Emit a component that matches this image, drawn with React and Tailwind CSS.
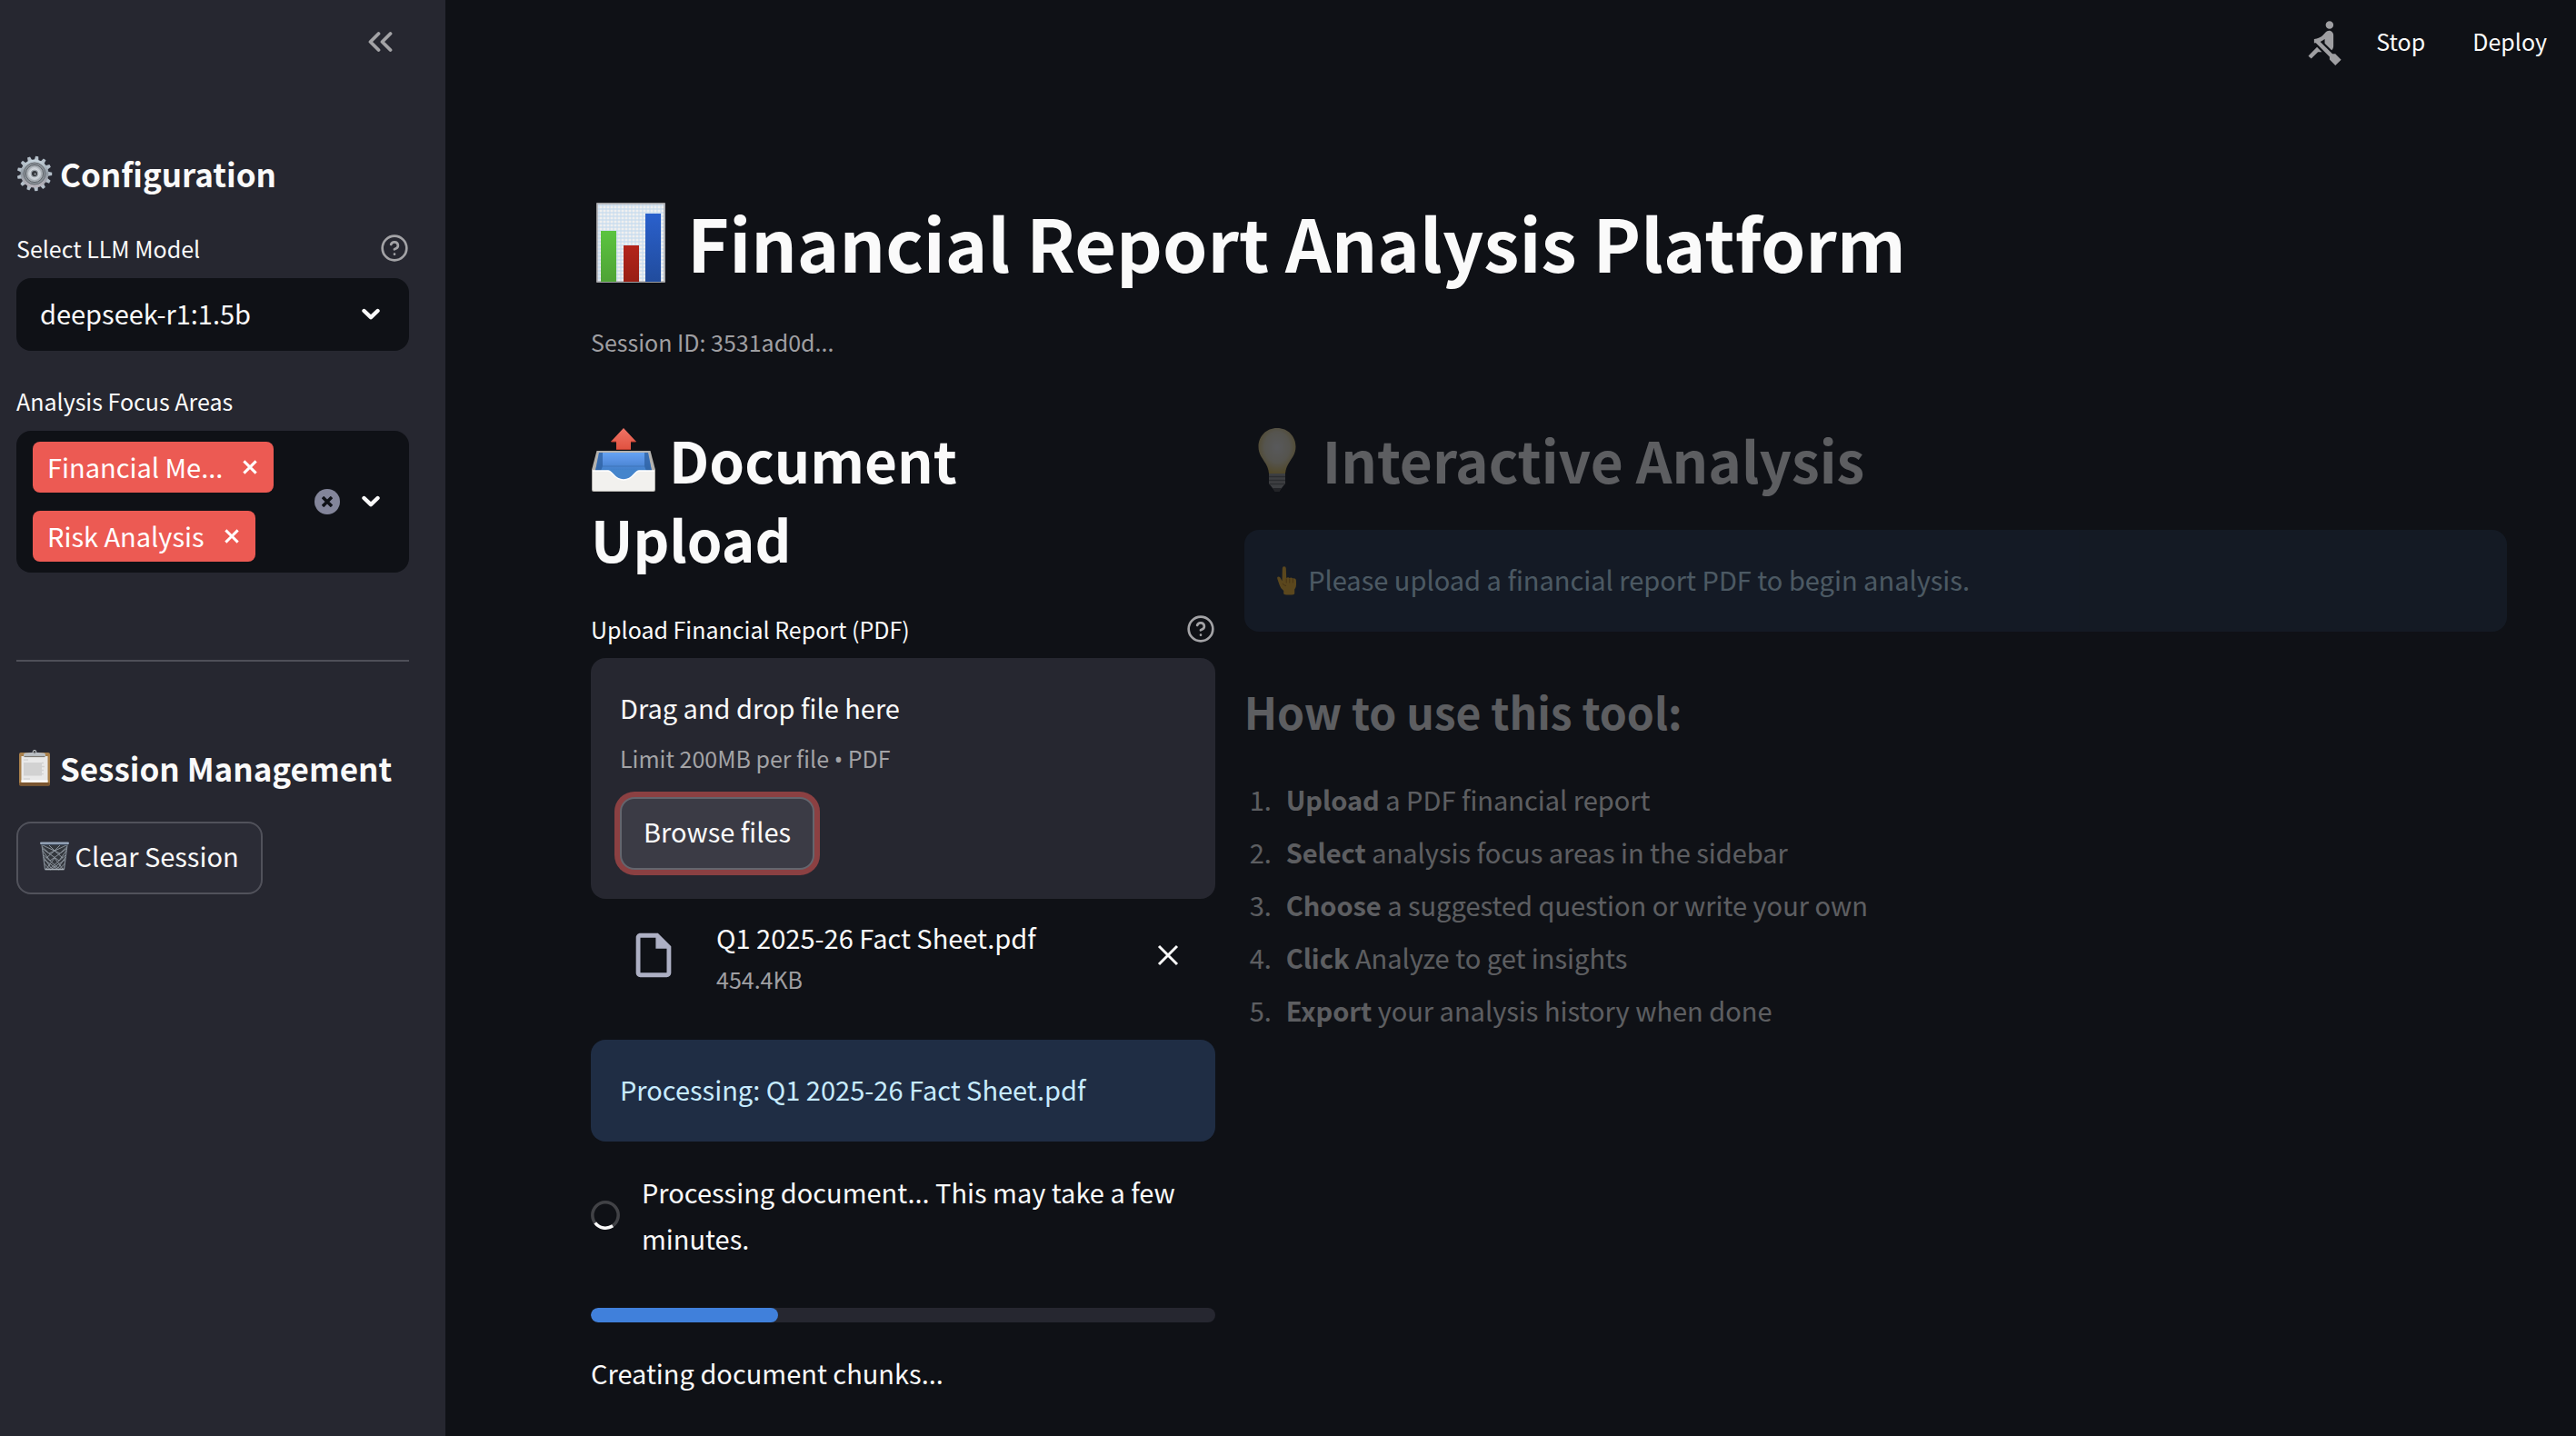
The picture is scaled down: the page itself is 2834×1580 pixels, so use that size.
import React from "react";
import { MdRowing, MdOutlineInsertDriveFile } from "react-icons/md";

function ChevronDown() {
  return (
    <svg viewBox="0 0 20 14" className="h-[14px] w-5" fill="none" stroke="#fafafa" strokeWidth="4.4" strokeLinecap="round" strokeLinejoin="round" aria-hidden="true">
      <path d="M2.5 3 10 10.2 17.5 3" />
    </svg>
  );
}

function Help({ label }) {
  return (
    <button type="button" aria-label={label} className="size-8 shrink-0">
      <svg viewBox="0 0 24 24" className="size-8" fill="none" stroke="#a3a3a6" strokeWidth="2" strokeLinecap="round" strokeLinejoin="round" aria-hidden="true">
        <circle cx="12" cy="12" r="10" />
        <path d="M9.09 9a3 3 0 0 1 5.83 1c0 2-3 3-3 3M12 17h.01" />
      </svg>
    </button>
  );
}

function Cross({ className, width }) {
  return (
    <svg viewBox="0 0 24 24" className={className} fill="none" stroke="currentColor" strokeWidth={width} aria-hidden="true">
      <path d="M2 2 22 22M22 2 2 22" />
    </svg>
  );
}

const TEETH = Array.from({ length: 13 }, (_, i) => (i * 360) / 13 + 8);

function GearIcon() {
  return (
    <svg viewBox="0 0 40 40" className="inline-block size-10 align-[-5px]" aria-hidden="true">
      <defs>
        <linearGradient id="steel" x1="0" y1="0" x2="0" y2="1">
          <stop offset="0" stopColor="#c9d6df" />
          <stop offset=".5" stopColor="#8f98a1" />
          <stop offset="1" stopColor="#b9b4bc" />
        </linearGradient>
      </defs>
      {TEETH.map((a) => (
        <path key={a} d="M17.6 5.5 18.4.8h3.2l.8 4.7z" fill="#b3bec8" transform={`rotate(${a} 20 20)`} />
      ))}
      <circle cx="20" cy="20" r="15.4" fill="url(#steel)" />
      <circle cx="20" cy="20" r="12" fill="#8b9299" stroke="#686d73" strokeWidth="1" />
      <circle cx="20" cy="20" r="9.6" fill="#a7adb3" stroke="#5d6268" strokeWidth="1" />
      <circle cx="20" cy="20" r="7.2" fill="#c6ccd2" />
      <circle cx="20" cy="20" r="5" fill="#9fa6ad" stroke="#dfe4e9" strokeWidth="1" />
      <circle cx="20" cy="20" r="3" fill="#33363b" />
      <circle cx="20.6" cy="20.6" r="1" fill="#a9afb6" />
    </svg>
  );
}

function ClipboardIcon() {
  return (
    <svg viewBox="0 0 40 40" className="inline-block size-10 align-[-5px]" aria-hidden="true">
      <rect x="3" y="3" width="34" height="36.5" rx="2" fill="#a87f4a" />
      <rect x="3" y="36" width="34" height="3.5" rx="1.5" fill="#7b5630" />
      <rect x="5.500" y="7" width="29" height="28.500" fill="#e9e9e9" />
      <rect x="5.500" y="33.500" width="29" height="2.200" fill="#ffffff" />
      <path d="M8 11h5M8 32h7" stroke="#cccccc" strokeWidth="1" />
      <rect x="8" y="14" width="20" height="14.500" fill="#d2d2d2" />
      <path d="M28 14.500h2M28 18.500h3M28 22.500h2M28 26.500h2" stroke="#d2d2d2" strokeWidth="1.400" />
      <path d="M8 7.200V5.500Q8 3.700 10 3.500l6-.5h8l6 .5q2 .2 2 2v1.700z" fill="#b9bec3" />
      <path d="M8.500 7.500h23" stroke="#7d7872" strokeWidth="1.200" />
      <circle cx="20" cy="2.300" r="1.900" fill="#4d4f52" stroke="#c3c7cb" strokeWidth="1" />
    </svg>
  );
}

function BinIcon() {
  return (
    <svg viewBox="0 0 32 32" className="inline-block size-8 align-[-4px]" aria-hidden="true">
      <path d="M1.500 2h29L27 30q-.2 1.500-1.500 1.500h-19Q5.200 31.500 5 30z" fill="#34383e" />
      <path d="M2.500 6 10 13l19-9M3 10l8 11L29 8M4 17l8 12 16-14M4.500 24l7 7 16-11M29.500 6 22 13 3 4M29 10l-8 11L3 8M28 17l-8 12L4 15M27.500 24l-7 7L4.500 20M10 4l6 6 6-6M7 30l9-12 9 12M16 10l-9 8M16 10l9 8" fill="none" stroke="#8a929b" strokeWidth="1" />
      <path d="M2 3.500 5.500 30.500M30 3.500 26.500 30.500" stroke="#828b95" strokeWidth="1.2" />
      <rect x="0" y=".5" width="32" height="2.600" rx="1.300" fill="#9aa9bd" />
      <path d="M2 3.300h28" stroke="#3c4a5f" strokeWidth="1" />
      <path d="M5.500 30.500h21" stroke="#a7afb8" strokeWidth="1.600" />
    </svg>
  );
}

const GRID = Array.from({ length: 21 }, (_, i) => 4 * i + 3);

function ChartIcon() {
  return (
    <svg viewBox="0 0 88 88" className="inline-block size-[88px] align-[-11px]" aria-hidden="true">
      <defs>
        <linearGradient id="bar-green" x1="0" y1="0" x2="0" y2="1">
          <stop offset="0" stopColor="#5bc43f" />
          <stop offset="1" stopColor="#4fa336" />
        </linearGradient>
        <linearGradient id="bar-red" x1="0" y1="0" x2="0" y2="1">
          <stop offset="0" stopColor="#b3241b" />
          <stop offset="1" stopColor="#981e14" />
        </linearGradient>
        <linearGradient id="bar-blue" x1="0" y1="0" x2="0" y2="1">
          <stop offset="0" stopColor="#2a60cc" />
          <stop offset="1" stopColor="#214c9d" />
        </linearGradient>
      </defs>
      <rect x="6.500" y=".5" width="75" height="87" fill="#f0f0f0" />
      {GRID.map((p) => (
        <path key={p} d={`M7 ${p}H81`} stroke="#bdd6ec" strokeWidth="1" />
      ))}
      {GRID.slice(1, 20).map((p) => (
        <path key={p} d={`M${p + 2} 1V87`} stroke="#c5dbef" strokeWidth="1" />
      ))}
      <rect x="7" y="1" width="74" height="86" fill="none" stroke="#a9a9ad" strokeWidth="1.500" />
      <rect x="11" y="31" width="17" height="56" fill="url(#bar-green)" />
      <rect x="36" y="47" width="17" height="40" fill="url(#bar-red)" />
      <rect x="60" y="12" width="17" height="75" fill="url(#bar-blue)" />
    </svg>
  );
}

function OutboxIcon() {
  return (
    <svg viewBox="0 0 72 72" className="inline-block size-[72px] align-[-10px]" aria-hidden="true">
      <defs>
        <linearGradient id="tray" x1="0" y1="0" x2="0" y2="1">
          <stop offset="0" stopColor="#65a3f3" />
          <stop offset=".5" stopColor="#568fe0" />
          <stop offset="1" stopColor="#3f7fc8" />
        </linearGradient>
        <linearGradient id="arrow" x1="0" y1="0" x2="0" y2="1">
          <stop offset="0" stopColor="#f07466" />
          <stop offset="1" stopColor="#e0513f" />
        </linearGradient>
      </defs>
      <path d="M6.500 26h59L71 47v22q0 2-2 2H3q-2 0-2-2V47z" fill="#b4b2ae" />
      <path d="M9 28h54l4 20H5z" fill="url(#tray)" />
      <path d="M9 28 5 48h6l2-5V28zM63 28l4 20h-6l-2-5V28z" fill="#2c5f9f" opacity=".75" />
      <path d="M13 43h46" stroke="#3f75b8" strokeWidth="1" />
      <path d="M16 47h40L49 58H23z" fill="#4585cc" />
      <path d="M2 48h17c5 0 6 10 17 10s12-10 17-10h17v20.500q0 1.500-1.500 1.500h-65Q2 70 2 68.500z" fill="#f2f1ee" />
      <path d="M2 48h17c5 0 6 10 17 10s12-10 17-10h17" fill="none" stroke="#ffffff" strokeWidth="1.500" />
      <path d="M36 1 50 16H44v9H28v-9H22z" fill="url(#arrow)" />
      <path d="M28 24.500h16M22.500 16H28M44 16h5.500" stroke="#b5392b" strokeWidth="1.200" />
    </svg>
  );
}

function BulbIcon() {
  return (
    <svg viewBox="0 0 72 72" className="inline-block size-[72px] align-[-10px]" aria-hidden="true">
      <defs>
        <radialGradient id="glass" cx=".5" cy=".42" r=".6">
          <stop offset="0" stopColor="#eceae6" />
          <stop offset=".55" stopColor="#e3dcc2" />
          <stop offset="1" stopColor="#d8b84e" />
        </radialGradient>
      </defs>
      <path d="M36 1C24 1 15.500 10 15.500 21.500 15.500 34 26 38 27 51h18c1-13 11.500-17 11.500-29.500C56.500 10 48 1 36 1z" fill="url(#glass)" />
      <path d="M27 51h18v11l-4 5-3 4h-4l-3-4-4-5z" fill="#9c9c9c" />
      <path d="M27 54.500h18M27 58.500h18M27.500 62.500h17" stroke="#666666" strokeWidth="1.600" />
      <path d="M31 67h10l-3 4h-4z" fill="#4a4a4a" />
    </svg>
  );
}

function PointUpIcon() {
  return (
    <svg viewBox="0 0 32 32" className="inline-block size-8 align-[-5px]" aria-hidden="true">
      <path d="M9.800 2.500q0-2.200 2-2.200t2 2.200l.4 10.500q1.800-1.200 3.500-.1 2-.9 3.400.5 3.900-.6 3.900 3v4.100q0 3-1.800 5v4.500q0 1.500-6 1.500t-6-1.500v-3q-3.200-2-4.600-6.500L4.500 14.500q-1-3 1-3t2.500 2l1.500 2.800z" fill="#f5b52e" />
      <path d="M14.200 13.500v5M17.800 13.500v5M21.300 14v4.500M10 19q1.500 2.500 4 2.500" fill="none" stroke="#b97a14" strokeWidth="1" />
    </svg>
  );
}

function Tag({ children }) {
  return (
    <span className="flex h-14 items-center gap-[22px] rounded-lg bg-[#ec5a53] pr-[18px] pb-px pl-4 text-[29px] text-white">
      <span className="whitespace-nowrap">{children}</span>
      <button type="button" aria-label={`Remove ${children}`}>
        <Cross className="size-4" width="4.500" />
      </button>
    </span>
  );
}

function Sidebar() {
  return (
    <aside className="w-[490px] shrink-0 bg-[#262730] pl-[18px] pr-10">
      <div className="flex h-[92px] items-center justify-end pr-[18px]">
        <button type="button" aria-label="Collapse sidebar">
          <svg viewBox="0 0 28 24" className="h-6 w-7" fill="none" stroke="#a3a3a6" strokeWidth="3.800" strokeLinecap="round" strokeLinejoin="round" aria-hidden="true">
            <path d="M12.500 3 3.500 12l9 9M25.500 3l-9 9 9 9" />
          </svg>
        </button>
      </div>

      <h2 className="mt-[75px] text-[35px] leading-[48px] font-bold">
        <GearIcon /> Configuration
      </h2>
      <div className="mt-[38px] flex items-center justify-between">
        <label htmlFor="model" className="text-[25px] leading-10">Select LLM Model</label>
        <Help label="Help for Select LLM Model" />
      </div>
      <div className="relative mt-[13px]">
        <select id="model" defaultValue="deepseek-r1:1.5b" className="h-20 w-full appearance-none rounded-2xl bg-[#0f1116] px-[26px] pb-0.5 text-[29px] text-[#fafafa]">
          <option>deepseek-r1:1.5b</option>
        </select>
        <span className="pointer-events-none absolute inset-y-0 right-8 flex items-center">
          <ChevronDown />
        </span>
      </div>

      <div id="focus-label" className="mt-[35px] text-[25px] leading-10">Analysis Focus Areas</div>
      <div role="group" aria-labelledby="focus-label" className="mt-[13px] flex items-center rounded-2xl bg-[#0f1116] py-3 pl-[18px] pr-8">
        <div className="flex flex-1 flex-col items-start gap-5">
          <Tag>Financial Me...</Tag>
          <Tag>Risk Analysis</Tag>
        </div>
        <button type="button" aria-label="Clear all" className="flex size-7 items-center justify-center rounded-full bg-[#83859a] text-[#0f1116]">
          <Cross className="size-3" width="7" />
        </button>
        <button type="button" aria-label="Open options" className="ml-6">
          <ChevronDown />
        </button>
      </div>

      <hr className="mt-24 border-t-2 border-[#4e4f58]" />

      <h2 className="mt-[93px] text-[35px] leading-[48px] font-bold whitespace-nowrap">
        <ClipboardIcon /> Session Management
      </h2>
      <button type="button" className="mt-[35px] h-20 rounded-2xl border-2 border-[#51525b] bg-[#2b2c36] px-6 pb-1 text-[29px] whitespace-nowrap">
        <BinIcon /> Clear Session
      </button>
    </aside>
  );
}

const STEPS = [
  ["Upload", "a PDF financial report"],
  ["Select", "analysis focus areas in the sidebar"],
  ["Choose", "a suggested question or write your own"],
  ["Click", "Analyze to get insights"],
  ["Export", "your analysis history when done"],
];

function UploadColumn() {
  const progress = 30;
  return (
    <section className="min-w-0 grow basis-[calc(100%/3-32px)]">
      <h2 className="pr-28 text-[62px] leading-[87px] font-bold">
        <OutboxIcon /> Document Upload
      </h2>
      <div className="mt-9 flex items-center justify-between">
        <span className="text-[25px] leading-10">Upload Financial Report (PDF)</span>
        <Help label="Help for Upload Financial Report" />
      </div>
      <div className="mt-3 rounded-2xl bg-[#262730] px-8 pt-7 pb-8">
        <p className="text-[29px] leading-[52px]">Drag and drop file here</p>
        <p className="mt-2 text-[25px] leading-[44px] text-[#a3a3a6]">
          Limit 200MB per file <span className="font-['Noto_Sans']">•</span> PDF
        </p>
        <button type="button" className="mt-5 h-20 rounded-2xl border-2 border-[#64656d] bg-[#3b3b45] px-6 pb-1 text-[29px] ring-6 ring-[#8b4042]">
          Browse files
        </button>
      </div>
      <div className="mt-4 flex items-center px-10">
        <MdOutlineInsertDriveFile className="size-[58px] shrink-0 text-[#adb0c4]" aria-hidden="true" />
        <div className="ml-10 flex-1">
          <div className="text-[29px] leading-[52px]">Q1 2025-26 Fact Sheet.pdf</div>
          <div className="text-[25px] leading-10 text-[#9f9fa2]">454.4KB</div>
        </div>
        <button type="button" aria-label="Remove Q1 2025-26 Fact Sheet.pdf">
          <Cross className="size-6" width="3" />
        </button>
      </div>
      <div className="mt-[47px] rounded-2xl bg-[#1f2d44] px-8 pt-7 pb-8 text-[29px] leading-[52px] text-[#c7ebff]">
        Processing: Q1 2025-26 Fact Sheet.pdf
      </div>
      <div role="status" className="mt-[30px] flex items-center gap-6">
        <svg viewBox="0 0 32 32" className="size-8 shrink-0" fill="none" strokeWidth="3.500" aria-hidden="true">
          <circle cx="16" cy="16" r="14.200" stroke="#414246" />
          <path d="M4.800 24.500a14.200 14.200 0 0 0 19.300 3.300" stroke="#fafafa" />
        </svg>
        <p className="text-[29px] leading-[51px]">Processing document... This may take a few minutes.</p>
      </div>
      <div role="progressbar" aria-valuenow={progress} aria-valuemin={0} aria-valuemax={100} aria-labelledby="progress-text" className="mt-[51px] h-4 overflow-hidden rounded-lg bg-[#262730]">
        <div className="h-full rounded-lg bg-[#4080db]" style={{ width: `${progress}%` }} />
      </div>
      <p id="progress-text" className="mt-[30px] text-[29px] leading-[51px]">Creating document chunks...</p>
    </section>
  );
}

function AnalysisColumn() {
  return (
    <section className="min-w-0 grow basis-[calc(200%/3-32px)] opacity-33">
      <h2 className="text-[62px] leading-[87px] font-bold">
        <BulbIcon /> Interactive Analysis
      </h2>
      <div className="mt-[34px] rounded-2xl bg-[#1f2d44] px-8 pt-7 pb-8 text-[29px] leading-[52px] text-[#c7ebff]">
        <PointUpIcon /> Please upload a financial report PDF to begin analysis.
      </div>
      <h3 className="mt-[54px] text-[48px] leading-[67px] font-bold">How to use this tool:</h3>
      <ol className="mt-[34px] pl-1.5 text-[29px] leading-[58px]">
        {STEPS.map(([verb, rest], i) => (
          <li key={verb} className="flex">
            <span className="w-10 shrink-0">{i + 1}.</span>
            <span>
              <strong className="font-bold">{verb}</strong> {rest}
            </span>
          </li>
        ))}
      </ol>
    </section>
  );
}

export default function App() {
  return (
    <div className="flex min-h-screen bg-[#0f1116] font-['Noto_Sans_CJK_SC',sans-serif] text-[#fafafa]">
      <Sidebar />
      <div className="min-w-0 flex-1">
        <header className="flex h-[92px] items-center justify-end pr-8 text-[25px]">
          <MdRowing className="size-[51px] text-[#9f9fa2]" aria-hidden="true" />
          <button type="button" className="ml-8">Stop</button>
          <button type="button" className="ml-[52px]">Deploy</button>
        </header>
        <main className="pt-[121px] pr-[76px] pb-10 pl-40">
          <h1 className="text-[79px] leading-[106px] font-bold">
            <ChartIcon /> Financial Report Analysis Platform
          </h1>
          <p className="mt-[35px] text-[25px] leading-[44px] text-[#9f9fa2]">Session ID: 3531ad0d...</p>
          <div className="mt-16 flex gap-8">
            <UploadColumn />
            <AnalysisColumn />
          </div>
        </main>
      </div>
    </div>
  );
}
